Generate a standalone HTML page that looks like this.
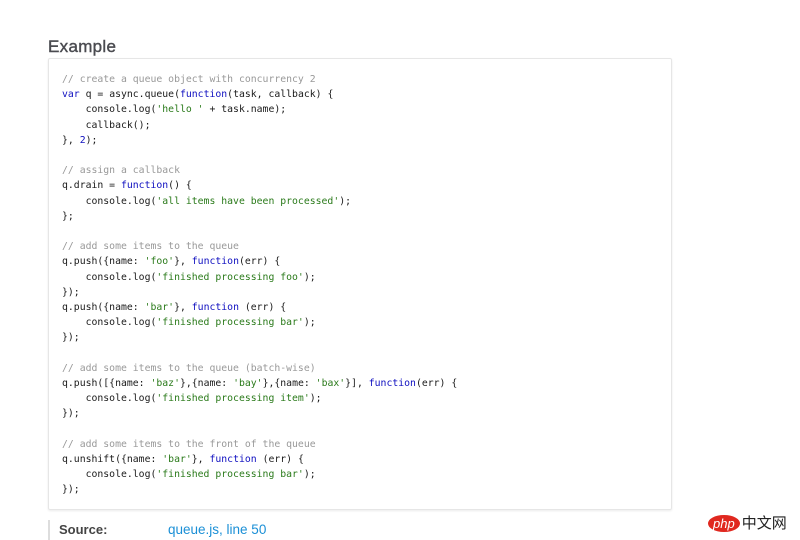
<!DOCTYPE html>
<html><head><meta charset="utf-8"><style>
body{margin:0;width:800px;height:540px;background:#fff;position:relative;overflow:hidden;font-family:"Liberation Sans",sans-serif}
h3{position:absolute;left:48px;top:37px;margin:0;font-size:17px;font-weight:normal;color:#4a4b50;letter-spacing:0.3px;-webkit-text-stroke:0.4px #4a4b50}
.box{position:absolute;left:48px;top:58px;width:622px;height:450px;border:1px solid #e6e6e6;box-shadow:0 1px 2px rgba(0,0,0,.08);border-radius:2px}
pre{position:absolute;left:62px;top:72px;margin:0;font-family:"DejaVu Sans Mono",monospace;font-size:9.8px;line-height:15.2px;color:#1a1a1a}
.c{color:#999}.k{color:#1010c0}.s{color:#2a7a1a}
.src{position:absolute;left:48px;top:520px;height:20px;border-left:2px solid #ddd;padding-left:9px;font-size:13px;line-height:20px}
.src b{color:#444}.src a{position:absolute;left:118px;top:0;color:#1a8fd6;white-space:nowrap;text-decoration:none;font-size:13.5px}
.logo{position:absolute;left:708px;top:512px;font-size:14px}
</style></head><body>
<h3>Example</h3>
<div class="box"></div>
<pre><span class="c">// create a queue object with concurrency 2</span>
<span class="k">var</span> q = async.queue(<span class="k">function</span>(task, callback) {
    console.log(<span class="s">'hello '</span> + task.name);
    callback();
}, <span class="k">2</span>);

<span class="c">// assign a callback</span>
q.drain = <span class="k">function</span>() {
    console.log(<span class="s">'all items have been processed'</span>);
};

<span class="c">// add some items to the queue</span>
q.push({name: <span class="s">'foo'</span>}, <span class="k">function</span>(err) {
    console.log(<span class="s">'finished processing foo'</span>);
});
q.push({name: <span class="s">'bar'</span>}, <span class="k">function</span> (err) {
    console.log(<span class="s">'finished processing bar'</span>);
});

<span class="c">// add some items to the queue (batch-wise)</span>
q.push([{name: <span class="s">'baz'</span>},{name: <span class="s">'bay'</span>},{name: <span class="s">'bax'</span>}], <span class="k">function</span>(err) {
    console.log(<span class="s">'finished processing item'</span>);
});

<span class="c">// add some items to the front of the queue</span>
q.unshift({name: <span class="s">'bar'</span>}, <span class="k">function</span> (err) {
    console.log(<span class="s">'finished processing bar'</span>);
});</pre>
<div class="src"><b>Source:</b><a>queue.js, line 50</a></div>
<div class="logo"><span style="display:inline-block;background:#e0281f;color:#fff;border-radius:50%;padding:0 5px;font-style:italic;font-size:13px;line-height:17px">php</span><span style="font-family:'Noto Sans CJK SC',sans-serif;color:#222;font-size:15px;margin-left:2px">中文网</span></div>
</body></html>
